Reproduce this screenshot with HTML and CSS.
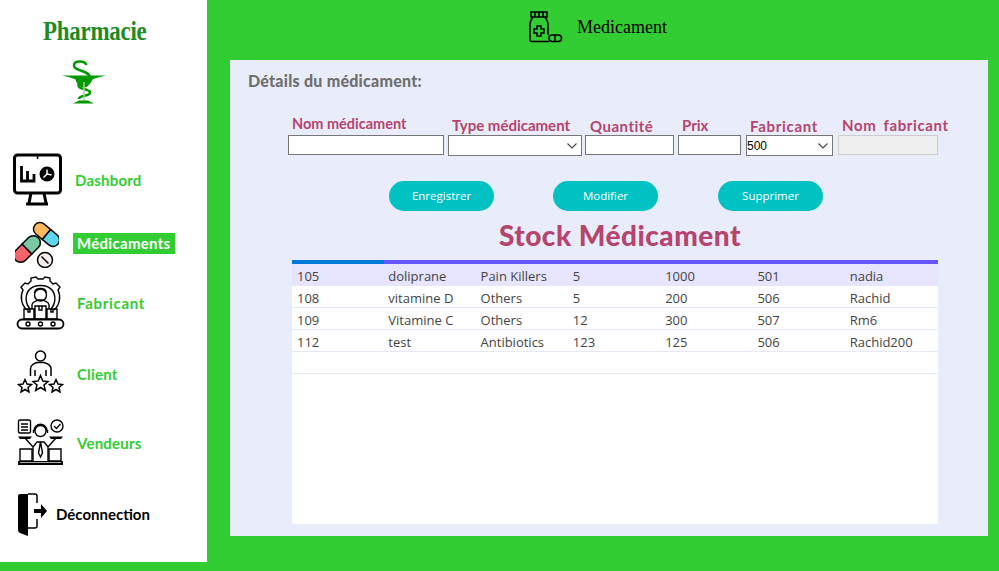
FILE: index.html
```html
<!DOCTYPE html>
<html lang="fr">
<head>
    <meta charset="UTF-8">
    <title>Medicament</title>
    <link rel="stylesheet" href="styles.css">
</head>
<body>
<div class="page">
    <aside class="sidebar">
        <h1 class="brand">Pharmacie</h1>
        <svg class="logo" viewBox="60 58 48 48" width="48" height="48">
            <path d="M62 75.500H106C100 77 95 78 92.500 79.500C90 85 87 87.500 84 87.500C80 87.500 77 85 75.500 79.500C73 78 68 77 62 75.500Z" fill="#009a00"/>
            <path d="M86.500 65C85 60.500 74 60 74 65.500C74 71.500 89.500 70 89.500 77C89.500 83 78.500 80.500 78.500 85.500C78.500 90 90 88.500 90 92.500C90 96.500 79 95 79 99" fill="none" stroke="#009a00" stroke-width="2.600"/>
            <path d="M84 82V102" stroke="#9fd49f" stroke-width="1.500"/>
            <path d="M73 103.500H94L88 100.500H79Z" fill="#009a00"/>
        </svg>
        <nav class="menu">
            <a class="menu-item item-dash">
                <svg viewBox="13 153 50 53" width="50" height="53">
                    <rect x="14.500" y="155" width="46" height="38" rx="3" fill="#fff" stroke="#000" stroke-width="3"/>
                    <path d="M31 193L29 203M44 193L46 203M26 204H48" fill="none" stroke="#000" stroke-width="3"/>
                    <path d="M21.500 166V181H34V174M27.500 171V181" fill="none" stroke="#000" stroke-width="2.800"/>
                    <circle cx="47" cy="174" r="7.500" fill="#000"/>
                    <path d="M47 169.500V174L51.500 175M47 174L43.500 177.500" fill="none" stroke="#fff" stroke-width="1.500"/>
                    <path d="M37.500 155V159" stroke="#000" stroke-width="1.500"/>
                </svg>
                <span>Dashbord</span>
            </a>
            <a class="menu-item item-med">
                <svg viewBox="15 220 44 47" width="44" height="47">
                    <g stroke="#000" stroke-width="1.500">
                        <g transform="rotate(40 46.500 233.500)">
                            <path d="M46.500 227H38A6.500 6.500 0 0 0 38 240H46.500Z" fill="#fdb85c"/>
                            <path d="M46.500 227H55A6.500 6.500 0 0 1 55 240H46.500Z" fill="#5dd6ec"/>
                        </g>
                        <g transform="rotate(-45 27 248)">
                            <path d="M27 241H18A7 7 0 0 0 18 255H27Z" fill="#f4646a"/>
                            <path d="M27 241H36A7 7 0 0 1 36 255H27Z" fill="#7bc8a4"/>
                        </g>
                        <circle cx="45" cy="259" r="7.500" fill="#f5f0ee"/>
                        <path d="M41.500 255.500L48.500 262.500"/>
                    </g>
                </svg>
                <span>Médicaments</span>
            </a>
            <a class="menu-item item-fab">
                <svg viewBox="16 275 49 56" width="49" height="56">
                    <g fill="none" stroke="#000" stroke-width="1.400">
                        <path d="M27 310C21 305 20 296 23 290L21 287L25 283L28 284L31 281V278L36 277L38 279H43L45 277L50 278V281L53 284L56 283L60 287L58 290C61 296 60 305 54 310"/>
                        <path d="M30 309C25 303 25 295 29 290C34 284 47 284 52 290C56 295 56 303 51 309"/>
                        <circle cx="40.500" cy="295" r="6"/>
                        <path d="M34.500 293C35 287 46 287 46.500 293M32 309V305C32 302 36 301 38 300H43C45 301 49 302 49 305V309"/>
                        <path d="M24 309H34V319H24ZM35 306H46V319H35ZM47 309H57V319H47ZM28 309V312H30V309M39 306V310H42V306M51 309V312H53V309"/>
                        <rect x="17.500" y="319.500" width="46" height="9" rx="4.500" stroke-width="1.800"/>
                        <circle cx="28" cy="324" r="2"/><circle cx="40.500" cy="324" r="2"/><circle cx="53" cy="324" r="2"/>
                    </g>
                </svg>
                <span>Fabricant</span>
            </a>
            <a class="menu-item item-cli">
                <svg viewBox="17 349 47 44" width="47" height="44">
                    <g fill="none" stroke="#000" stroke-width="1.500">
                        <circle cx="40.500" cy="356" r="5"/>
                        <path d="M30.500 376V369C30.500 365 35 363 37 362.500H44C46 363 51 365 51 369V376M35 370V376M46 370V376"/>
                        <path d="M25 379.500L27 384L31.500 384.500L28 387.500L29 392L25 389.500L21 392L22 387.500L18.500 384.500L23 384Z"/>
                        <path d="M40.500 375.500L42.800 381L48 381.500L44 385L45.300 390.500L40.500 387.500L35.700 390.500L37 385L33 381.500L38.200 381Z"/>
                        <path d="M56 379.500L58 384L62.500 384.500L59 387.500L60 392L56 389.500L52 392L53 387.500L49.500 384.500L54 384Z"/>
                    </g>
                </svg>
                <span>Client</span>
            </a>
            <a class="menu-item item-ven">
                <svg viewBox="17 418 48 49" width="48" height="49">
                    <g fill="none" stroke="#000" stroke-width="1.400">
                        <rect x="18.500" y="420" width="12" height="13" rx="1.500"/>
                        <path d="M21 424H28M21 427H28M21 430H28"/>
                        <circle cx="57" cy="426" r="6"/>
                        <path d="M54 426L56.500 428.500L60.500 424"/>
                        <circle cx="40.500" cy="431" r="5.500"/>
                        <path d="M34 431C34 422 47 422 47 431M33.500 430V433M47.500 430V433"/>
                        <path d="M25 438L33 447L37 442H44L48 447L56 438M33 447V461M48 447V461"/>
                        <path d="M40.500 442L38.500 453L40.500 457L42.500 453Z"/>
                        <path d="M20 449H32V461H20ZM49 449H61V461H49Z"/>
                    </g>
                    <path d="M18 436.500H32L30 439H20ZM49 436.500H63L61 439H51ZM18 461H63V465H18Z" fill="#000"/>
                    <path d="M20 462.500H61" stroke="#aaa"/>
                </svg>
                <span>Vendeurs</span>
            </a>
            <a class="menu-item item-out">
                <svg viewBox="17 493 31 45" width="31" height="45">
                    <path d="M18 496Q18 494 20 494H28V536L20 533Q18 532 18 530Z" fill="#000"/>
                    <path d="M28 494H35Q37 494 37 496V503M37 519V526Q37 528 35 528H28" fill="none" stroke="#000" stroke-width="1.500"/>
                    <path d="M34 509H41V504L47 511L41 518V513H34Z" fill="#000"/>
                </svg>
                <span>Déconnection</span>
            </a>
        </nav>
    </aside>

    <main class="content">
        <header class="topbar">
            <svg viewBox="528 10 35 33" width="35" height="33">
                <g fill="none" stroke="#000" stroke-width="1.600">
                    <path d="M531 12H547V17H531ZM535 12V17M539 12V17M543 12V17"/>
                    <path d="M533 17C531 20 530 21 530 24V39.500Q530 41.500 532 41.500H549M545 17C547 20 548 21 548 24V35"/>
                    <path d="M537 26H541V29H544V33H541V36H537V33H534V29H537Z" stroke-width="1.500"/>
                    <rect x="549" y="35" width="12.500" height="6.500" rx="3.200"/>
                    <path d="M555 35V41.500"/>
                </g>
            </svg>
            <span class="topbar-title">Medicament</span>
        </header>

        <section class="panel">
            <h2 class="panel-title">Détails du médicament:</h2>
            <form class="fields">
                <div class="field f-nom">
                    <label>Nom médicament</label>
                    <input type="text">
                </div>
                <div class="field f-type">
                    <label>Type médicament</label>
                    <select><option></option></select>
                </div>
                <div class="field f-qte">
                    <label>Quantité</label>
                    <input type="text">
                </div>
                <div class="field f-prix">
                    <label>Prix</label>
                    <input type="text">
                </div>
                <div class="field f-fab">
                    <label>Fabricant</label>
                    <select><option>500</option></select>
                </div>
                <div class="field f-nomfab">
                    <label>Nom fabricant</label>
                    <input type="text" disabled>
                </div>
            </form>
            <div class="actions">
                <button type="button">Enregistrer</button>
                <button type="button">Modifier</button>
                <button type="button">Supprimer</button>
            </div>
            <h2 class="stock-title">Stock Médicament</h2>
            <div class="grid-wrap">
                <table class="grid">
                    <thead>
                        <tr><th class="first"></th><th></th><th></th><th></th><th></th><th></th><th></th></tr>
                    </thead>
                    <tbody>
                        <tr class="selected"><td>105</td><td>doliprane</td><td>Pain Killers</td><td>5</td><td>1000</td><td>501</td><td>nadia</td></tr>
                        <tr><td>108</td><td>vitamine D</td><td>Others</td><td>5</td><td>200</td><td>506</td><td>Rachid</td></tr>
                        <tr><td>109</td><td>Vitamine C</td><td>Others</td><td>12</td><td>300</td><td>507</td><td>Rm6</td></tr>
                        <tr><td>112</td><td>test</td><td>Antibiotics</td><td>123</td><td>125</td><td>506</td><td>Rachid200</td></tr>
                        <tr><td></td><td></td><td></td><td></td><td></td><td></td><td></td></tr>
                    </tbody>
                </table>
            </div>
        </section>
    </main>
</div>
</body>
</html>
```

FILE: styles.css
```css
html, body {
    margin: 0;
    height: 100%;
    overflow: hidden;
}

body {
    background-color: #32cd32;
    font-family: "Lato", sans-serif;
}

.page {
    display: flex;
    align-items: flex-start;
}

/* Sidebar */
.sidebar {
    width: 207px;
    height: 562px;
    flex: none;
    background-color: #fff;
    display: flex;
    flex-direction: column;
}

.brand {
    margin: 18px 0 0 43px;
    font-family: "Liberation Serif", serif;
    font-size: 27px;
    line-height: 26px;
    font-weight: bold;
    color: #1f8a1f;
    letter-spacing: -0.3px;
    transform: scaleX(0.85);
    transform-origin: left center;
}

.logo {
    margin: 14px 0 0 60px;
    display: block;
}

.menu {
    display: flex;
    flex-direction: column;
    margin-top: 47px;
}

.menu-item {
    display: flex;
    align-items: center;
    font-size: 15px;
    font-weight: bold;
    color: #32cd32;
    letter-spacing: 0.2px;
}

.menu-item svg {
    display: block;
    flex: none;
}

.item-dash { padding-left: 13px; gap: 12px; }
.item-med { padding-left: 15px; gap: 14px; margin-top: 15px; }
.item-fab { padding-left: 16px; gap: 12px; margin-top: 7px; letter-spacing: 0.7px; }
.item-cli { padding-left: 17px; gap: 13px; margin-top: 18px; }
.item-ven { padding-left: 17px; gap: 12px; margin-top: 25px; }
.item-out { padding-left: 17px; gap: 8px; margin-top: 26px; color: #000; letter-spacing: 0; }

.item-cli span { margin-top: 6px; }
.item-out span { margin-top: -3px; }

.item-med span {
    background-color: #32cd32;
    color: #fff;
    width: 98px;
    height: 21px;
    line-height: 21px;
    padding-left: 4px;
    margin-top: -3px;
    letter-spacing: 0.3px;
}

/* Main */
.content {
    flex: 1;
    min-width: 0;
}

.topbar {
    height: 60px;
    box-sizing: border-box;
    padding: 10px 0 0 321px;
    display: flex;
    align-items: flex-start;
    gap: 14px;
}

.topbar svg {
    display: block;
}

.topbar-title {
    font-family: "Liberation Serif", serif;
    font-size: 18px;
    line-height: 34px;
    color: #000;
}

.panel {
    margin: 0 11px 0 23px;
    height: 476px;
    background-color: #e9edfb;
    padding-top: 11px;
    box-sizing: border-box;
}

.panel-title {
    margin: 0 0 0 18px;
    font-size: 16px;
    line-height: 20px;
    font-weight: 900;
    color: #6f6f6f;
    letter-spacing: 0.25px;
}

.fields {
    display: flex;
    align-items: flex-end;
    margin: 29px 0 0 58px;
    height: 35px;
}

.field {
    display: flex;
    flex-direction: column;
    flex: none;
}

.field label {
    font-size: 15px;
    line-height: 18px;
    font-weight: bold;
    color: #b5446e;
    white-space: nowrap;
    padding-bottom: 1px;
}

.field input,
.field select {
    box-sizing: border-box;
    display: block;
    width: 100%;
    height: 20px;
    margin: 0;
    padding: 0 1px;
    border: 1px solid #767676;
    border-radius: 0;
    background-color: #fff;
    font-family: "Liberation Sans", sans-serif;
    font-size: 12px;
}

.field select {
    height: 21px;
    margin-bottom: -1px;
    padding: 0;
    appearance: none;
    background-image: url("data:image/svg+xml,%3Csvg xmlns='http://www.w3.org/2000/svg' width='10' height='6'%3E%3Cpath d='M.5.5l4.500 4.500 4.500-4.500' fill='none' stroke='%23444' stroke-width='1.100'/%3E%3C/svg%3E");
    background-repeat: no-repeat;
    background-position: right 4px center;
}

.field input:disabled {
    background-color: #efefef;
    border-color: #ccc;
}

.f-nom { width: 156px; margin-right: 4px; }
.f-nom label { padding-left: 4px; padding-bottom: 2px; font-size: 14.500px; }
.f-type { width: 134px; margin-right: 3px; }
.f-type label { padding-left: 4px; }
.f-qte { width: 89px; margin-right: 4px; }
.f-qte label { padding-left: 5px; padding-bottom: 0; letter-spacing: 0.5px; }
.f-prix { width: 63px; margin-right: 5px; }
.f-prix label { padding-left: 4px; }
.f-fab { width: 87px; margin-right: 5px; }
.f-fab label { padding-left: 4px; padding-bottom: 0; letter-spacing: 0.7px; }
.f-nomfab { width: 100px; }
.f-nomfab label { padding-left: 4px; letter-spacing: 0.6px; word-spacing: 3px; }

.actions {
    display: flex;
    gap: 59px;
    margin: 26px 0 0 159px;
}

.actions button {
    width: 105px;
    height: 30px;
    padding: 0 0 2px;
    border: 0;
    border-radius: 15px;
    background-color: #00c2c2;
    color: #fff;
    font-family: "Open Sans", sans-serif;
    font-size: 11.500px;
}

.actions button:last-child {
    margin-left: 1px;
}

.stock-title {
    margin: 7px 0 0;
    text-align: center;
    font-size: 28px;
    line-height: 34px;
    font-weight: 900;
    color: #b5446e;
    letter-spacing: 0.5px;
    padding-left: 22px;
}

.grid-wrap {
    margin: 8px 50px 0 62px;
    height: 264px;
    background-color: #fff;
}

.grid {
    width: 100%;
    border-collapse: separate;
    border-spacing: 0;
    table-layout: fixed;
    font-family: "Open Sans", sans-serif;
    font-size: 13px;
    color: #444;
}

.grid th {
    height: 4px;
    padding: 0;
    background-color: #6655ff;
}

.grid th.first {
    background-color: #0078d7;
}

.grid td {
    height: 22px;
    box-sizing: border-box;
    padding: 2px 0 0 4px;
    border-bottom: 1px solid #e8e8f6;
    white-space: nowrap;
}

.grid td:first-child {
    padding-left: 5px;
}

.grid tr.selected td {
    background-color: #e6e4ff;
    border-bottom: 0;
}
```
